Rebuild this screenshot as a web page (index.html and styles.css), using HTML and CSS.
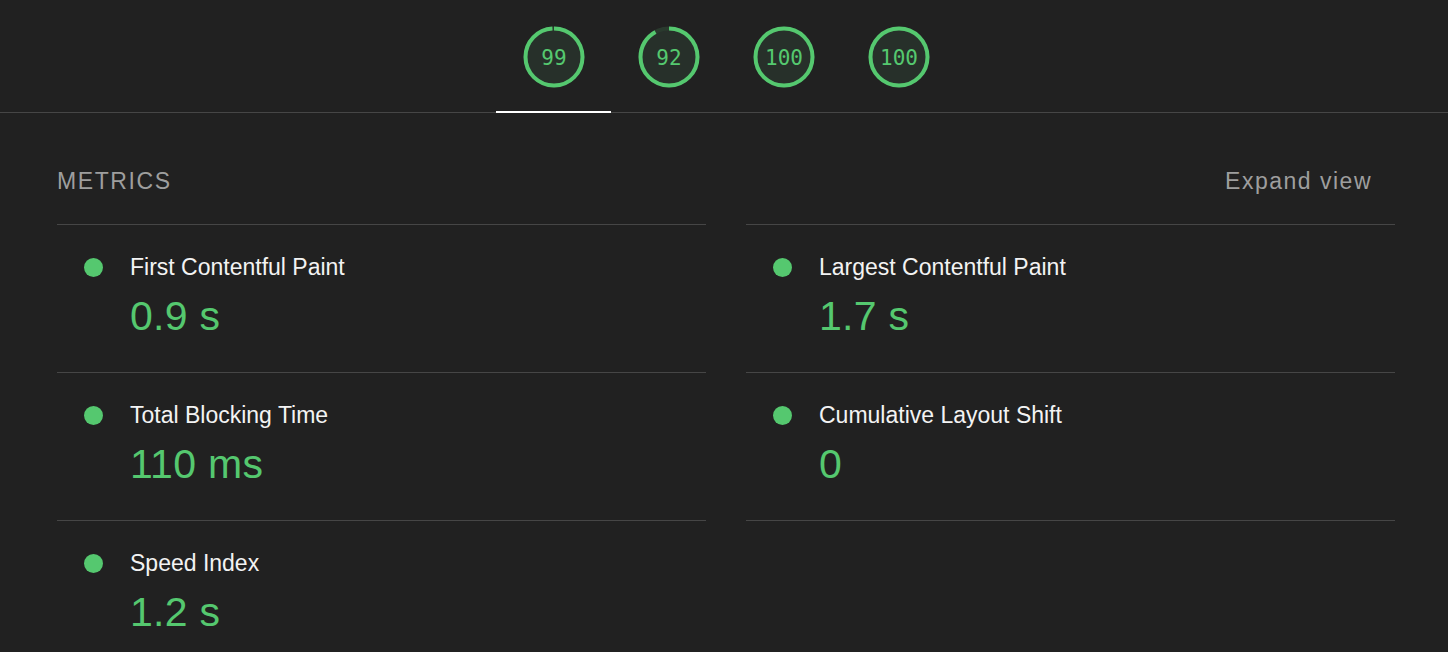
FILE: index.html
```html
<!DOCTYPE html>
<html lang="en">
<head>
<meta charset="utf-8">
<title>Lighthouse</title>
<link rel="stylesheet" href="styles.css">
</head>
<body>
<div class="topbar">
  <div class="tabs">
    <div class="tab active">
      <svg class="gauge" viewBox="0 0 62 62" width="62" height="62">
        <circle class="gauge-base" cx="31" cy="31" r="28.5"/>
        <circle class="gauge-arc" cx="31" cy="31" r="28.5" style="stroke-dasharray: 177.2 179.07"/>
        <text x="31" y="39" class="gauge-text">99</text>
      </svg>
    </div>
    <div class="tab">
      <svg class="gauge" viewBox="0 0 62 62" width="62" height="62">
        <circle class="gauge-base" cx="31" cy="31" r="28.5"/>
        <circle class="gauge-arc" cx="31" cy="31" r="28.5" style="stroke-dasharray: 164.7 179.07"/>
        <text x="31" y="39" class="gauge-text">92</text>
      </svg>
    </div>
    <div class="tab">
      <svg class="gauge" viewBox="0 0 62 62" width="62" height="62">
        <circle class="gauge-base" cx="31" cy="31" r="28.5"/>
        <circle class="gauge-arc" cx="31" cy="31" r="28.5" style="stroke-dasharray: 179.07 179.07"/>
        <text x="31" y="39" class="gauge-text">100</text>
      </svg>
    </div>
    <div class="tab">
      <svg class="gauge" viewBox="0 0 62 62" width="62" height="62">
        <circle class="gauge-base" cx="31" cy="31" r="28.5"/>
        <circle class="gauge-arc" cx="31" cy="31" r="28.5" style="stroke-dasharray: 179.07 179.07"/>
        <text x="31" y="39" class="gauge-text">100</text>
      </svg>
    </div>
  </div>
</div>

<section class="metrics">
  <div class="metrics-header">
    <span class="metrics-title">Metrics</span>
    <span class="metrics-toggle">Expand view</span>
  </div>
  <div class="metrics-grid">
    <div class="metric">
      <span class="dot"></span>
      <div class="metric-body">
        <div class="metric-title">First Contentful Paint</div>
        <div class="metric-value">0.9&nbsp;s</div>
      </div>
    </div>
    <div class="metric">
      <span class="dot"></span>
      <div class="metric-body">
        <div class="metric-title">Largest Contentful Paint</div>
        <div class="metric-value">1.7&nbsp;s</div>
      </div>
    </div>
    <div class="metric">
      <span class="dot"></span>
      <div class="metric-body">
        <div class="metric-title">Total Blocking Time</div>
        <div class="metric-value">110&nbsp;ms</div>
      </div>
    </div>
    <div class="metric last-right">
      <span class="dot"></span>
      <div class="metric-body">
        <div class="metric-title">Cumulative Layout Shift</div>
        <div class="metric-value">0</div>
      </div>
    </div>
    <div class="metric">
      <span class="dot"></span>
      <div class="metric-body">
        <div class="metric-title">Speed Index</div>
        <div class="metric-value">1.2&nbsp;s</div>
      </div>
    </div>
  </div>
</section>
</body>
</html>
```

FILE: styles.css
```css
html, body {
  margin: 0;
  padding: 0;
  background: #212121;
  font-family: "Liberation Sans", Arial, sans-serif;
  color: #f1f1f1;
  overflow: hidden;
}

.topbar {
  height: 112px;
  border-bottom: 1px solid #464646;
  display: flex;
  justify-content: center;
}

.tabs {
  display: flex;
  margin-left: 4px;
}

.tab {
  position: relative;
  width: 115px;
  display: flex;
  justify-content: center;
  padding-top: 26px;
}

.tab.active::after {
  content: "";
  position: absolute;
  left: 0;
  right: 0;
  bottom: -1px;
  height: 2px;
  background: #ffffff;
}

.gauge {
  display: block;
}

.gauge-base {
  fill: #27302a;
  stroke: #2a3a2e;
  stroke-width: 4;
}

.gauge-arc {
  fill: none;
  stroke: #55c86f;
  stroke-width: 4;
  stroke-linecap: butt;
  transform: rotate(-90deg);
  transform-origin: 31px 31px;
}

.gauge-text {
  font-family: "DejaVu Sans Mono", "Liberation Mono", monospace;
  font-size: 21px;
  fill: #55c86f;
  text-anchor: middle;
}

.metrics {
  width: 1338px;
  margin-left: 57px;
}

.metrics-header {
  display: flex;
  justify-content: space-between;
  margin-top: 54px;
  margin-bottom: 29px;
  padding-right: 23px;
  font-size: 23px;
  line-height: 28px;
  color: #9e9e9e;
}

.metrics-title {
  text-transform: uppercase;
  letter-spacing: 1.6px;
}

.metrics-toggle {
  letter-spacing: 1.5px;
}

.metrics-grid {
  display: grid;
  grid-template-columns: 649px 649px;
  column-gap: 40px;
}

.metric {
  border-top: 1px solid #464646;
  display: flex;
  align-items: flex-start;
  padding: 28px 0 32px 27px;
  gap: 27px;
}

.metric.last-right {
  border-bottom: 1px solid #464646;
  margin-bottom: -1px;
}

.dot {
  width: 19px;
  height: 19px;
  border-radius: 50%;
  background: #55c86f;
  margin-top: 4.5px;
  flex: none;
}

.metric-title {
  font-size: 23px;
  line-height: 28px;
  color: #f3f3f3;
}

.metric-value {
  margin-top: 11px;
  font-size: 41px;
  line-height: 48px;
  letter-spacing: 0.3px;
  color: #55c86f;
}
```
